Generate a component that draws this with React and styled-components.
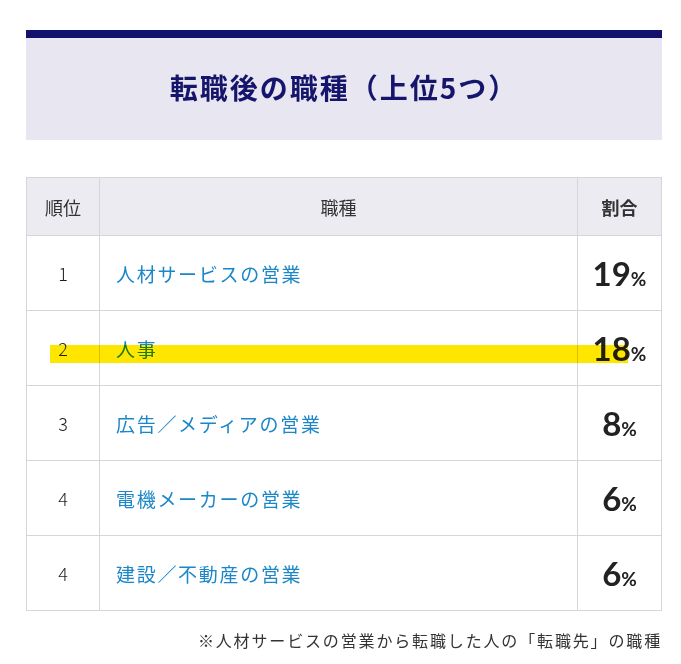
import React from 'react';
import styled, { createGlobalStyle } from 'styled-components';

const GlobalStyle = createGlobalStyle`
  body {
    margin: 0;
    background: #fff;
    font-family: 'Noto Sans CJK JP', 'Noto Sans', sans-serif;
    color: #333;
  }
`;

const Page = styled.div`
  width: 636px;
  padding: 30px 0 0 26px;
`;

const Heading = styled.div`
  height: 110px;
  box-sizing: border-box;
  padding-bottom: 4px;
  border-top: 8px solid #11116e;
  background: #e8e6f0;
  display: flex;
  align-items: center;
  justify-content: center;
`;

const HeadingText = styled.h2`
  margin: 0;
  font-size: 28px;
  font-weight: 700;
  letter-spacing: 2px;
  color: #15156b;
`;

const TableWrap = styled.div`
  position: relative;
  margin-top: 37px;
`;

const Table = styled.table`
  width: 100%;
  border-collapse: collapse;
  table-layout: fixed;
`;

const Th = styled.th`
  height: 57px;
  padding: 0;
  border: 1px solid #d6d6d6;
  background: #ebebf1;
  font-size: 18px;
  font-weight: ${(p) => (p.$bold ? 700 : 400)};
  color: #333;
  width: ${(p) => p.$width || 'auto'};
  text-align: center;
`;

const Td = styled.td`
  height: 74px;
  padding: 0;
  border: 1px solid #d6d6d6;
  text-align: center;
  vertical-align: middle;
`;

const Rank = styled(Td)`
  font-size: 18px;
  font-weight: 300;
  color: #1e1e1e;
`;

const Job = styled(Td)`
  text-align: left;
  padding-left: 16px;
`;

const JobLink = styled.a`
  font-size: 19px;
  letter-spacing: 1.7px;
  color: #1b87c9;
  text-decoration: none;
`;

const Rate = styled(Td)`
  font-family: Lato, 'Noto Sans', sans-serif;
  font-weight: 700;
  color: #222;
  font-size: 33px;
`;

const Pct = styled.span`
  font-size: 19px;
`;

const Marker = styled.div`
  position: absolute;
  left: 24px;
  top: 168px;
  width: 578px;
  height: 18px;
  background: #ffe600;
  mix-blend-mode: multiply;
  pointer-events: none;
`;

const Note = styled.p`
  margin: 17px 0 0;
  text-align: right;
  font-size: 16px;
  letter-spacing: 1.85px;
  color: #333;
`;

const rows = [
  { rank: 1, job: '人材サービスの営業', rate: 19 },
  { rank: 2, job: '人事', rate: 18 },
  { rank: 3, job: '広告／メディアの営業', rate: 8 },
  { rank: 4, job: '電機メーカーの営業', rate: 6 },
  { rank: 4, job: '建設／不動産の営業', rate: 6 },
];

export default function App() {
  return (
    <>
      <GlobalStyle />
      <Page>
        <Heading>
          <HeadingText>転職後の職種（上位5つ）</HeadingText>
        </Heading>
        <TableWrap>
          <Table>
            <thead>
              <tr>
                <Th $width="72px">順位</Th>
                <Th>職種</Th>
                <Th $width="83px" $bold>割合</Th>
              </tr>
            </thead>
            <tbody>
              {rows.map((r, i) => (
                <tr key={i}>
                  <Rank>{r.rank}</Rank>
                  <Job>
                    <JobLink href="#">{r.job}</JobLink>
                  </Job>
                  <Rate>
                    {r.rate}
                    <Pct>%</Pct>
                  </Rate>
                </tr>
              ))}
            </tbody>
          </Table>
          <Marker />
        </TableWrap>
        <Note>※人材サービスの営業から転職した人の「転職先」の職種</Note>
      </Page>
    </>
  );
}
